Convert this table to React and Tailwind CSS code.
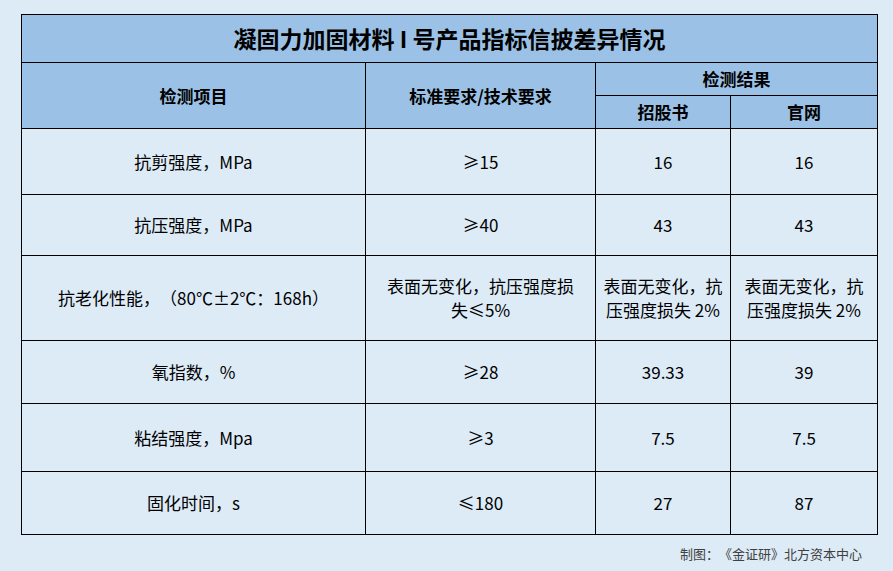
import React from 'react';

const rows = [
  { item: '抗剪强度，MPa', std: '≥15', a: '16', b: '16', h: 'h-[66px]' },
  { item: '抗压强度，MPa', std: '≥40', a: '43', b: '43', h: 'h-[61px]' },
  {
    item: '抗老化性能，（80℃±2℃：168h）',
    std: <>表面无变化，抗压强度损<br />失≤5%</>,
    a: <>表面无变化，抗<br />压强度损失 2%</>,
    b: <>表面无变化，抗<br />压强度损失 2%</>,
    h: 'h-[85px]',
  },
  { item: '氧指数，%', std: '≥28', a: '39.33', b: '39', h: 'h-[63px]' },
  { item: '粘结强度，Mpa', std: '≥3', a: '7.5', b: '7.5', h: 'h-[68px]' },
  { item: '固化时间，s', std: '≤180', a: '27', b: '87', h: 'h-[63px]' },
];

export default function App() {
  const cell = 'border border-black text-center align-middle leading-[24px] px-1';
  return (
    <div className="w-[893px] h-[571px] bg-[#ddebf7] pt-[14px] pl-[21px] text-black [text-spacing-trim:space-all] font-['Noto_Sans_CJK_SC','Noto_Sans',sans-serif]">
      <table className="table-fixed border-collapse w-[856px] text-[17px]">
        <colgroup>
          <col className="w-[344px]" />
          <col className="w-[230px]" />
          <col className="w-[135px]" />
          <col className="w-[147px]" />
        </colgroup>
        <thead className="bg-[#9bc2e6] font-bold">
          <tr className="h-[48px]">
            <th colSpan={4} className="border border-black text-[23px] text-center align-middle">
              凝固力加固材料 I 号产品指标信披差异情况
            </th>
          </tr>
          <tr className="h-[33px]">
            <th rowSpan={2} className={cell}>检测项目</th>
            <th rowSpan={2} className={cell}>标准要求/技术要求</th>
            <th colSpan={2} className={cell}>检测结果</th>
          </tr>
          <tr className="h-[33px]">
            <th className={cell}>招股书</th>
            <th className={cell}>官网</th>
          </tr>
        </thead>
        <tbody className="font-normal">
          {rows.map((r, i) => (
            <tr key={i} className={r.h}>
              <td className={cell}>{r.item}</td>
              <td className={cell}>{r.std}</td>
              <td className={cell}>{r.a}</td>
              <td className={cell}>{r.b}</td>
            </tr>
          ))}
        </tbody>
      </table>
      <div className="w-[856px] flex justify-end pr-[15px] mt-[9px] text-[13px] text-[#404040]">
        制图：《金证研》北方资本中心
      </div>
    </div>
  );
}
